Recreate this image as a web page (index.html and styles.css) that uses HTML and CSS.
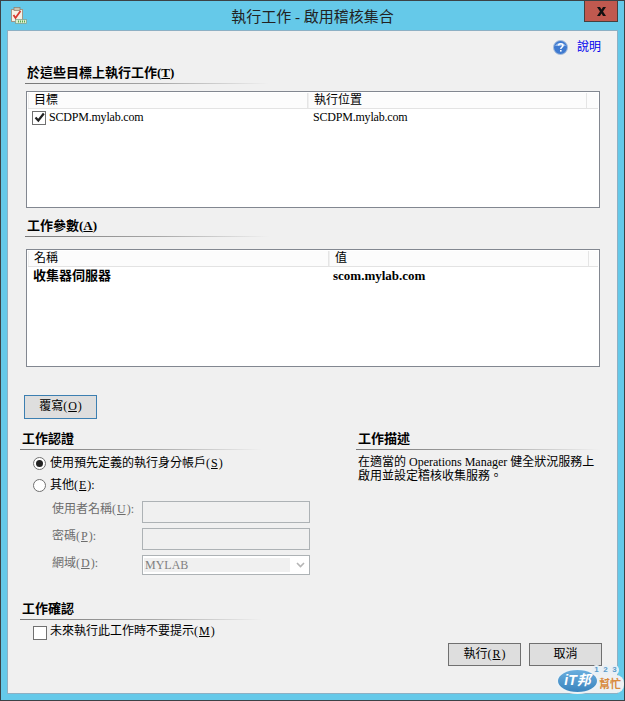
FILE: index.html
```html
<!DOCTYPE html>
<html lang="zh-Hant">
<head>
<meta charset="utf-8">
<title>執行工作 - 啟用稽核集合</title>
<link rel="stylesheet" href="styles.css">
</head>
<body>
<div class="window">
  <div class="titlebar">
    <svg class="app-icon" width="17" height="17" viewBox="0 0 17 17">
      <rect x="1.500" y="2.500" width="11" height="12" fill="#f6f1e6" stroke="#a39684"/>
      <rect x="4" y="0.500" width="6" height="3" fill="#cfc2ad" stroke="#8c7c68" stroke-width="0.700"/>
      <path d="M3.500 8l2 3 5-7" fill="none" stroke="#d8392f" stroke-width="1.800"/>
      <rect x="5.500" y="12.500" width="11" height="4" fill="#dcefd0" stroke="#7d9a88" stroke-width="0.700"/>
      <path d="M8.500 13.500v2M10.500 13.500v2M12.500 13.500v2M14.500 13.500v2" stroke="#5aa653"/>
    </svg>
    <div class="title">執行工作 - 啟用稽核集合</div>
    <div class="close">
      <svg width="11" height="9" viewBox="0 0 11 9"><path d="M1 0h3l1.500 2.500L7 0h3L7 4.500 10 9H7L5.500 6.500 4 9H1l3-4.500z" fill="#111"/></svg>
    </div>
  </div>
  <div class="client">
    <div class="help-row">
      <svg class="help-icon" width="15" height="15" viewBox="0 0 15 15">
        <circle cx="7.500" cy="7.500" r="7" fill="#3f7ad0" stroke="#a9bfdc"/>
        <path d="M2 6a6 5 0 0 1 11 0z" fill="#8fb6ea"/>
        <path d="M5.500 5.500c0-2.500 4.500-2.500 4.500 0 0 1.800-2.200 1.600-2.200 3.500" fill="none" stroke="#fff" stroke-width="1.500"/>
        <rect x="7" y="10" width="1.600" height="1.600" fill="#fff"/>
      </svg>
      <span class="help-link">說明</span>
    </div>

    <h2 class="heading heading-list">於這些目標上執行工作(<u>T</u>)</h2>
    <div class="list list-a">
      <div class="list-head cols-a">
        <div class="col-name">目標</div>
        <div class="col-name">執行位置</div>
        <div></div>
      </div>
      <div class="list-row cols-a">
        <div class="cell-check">
          <span class="check">
            <svg width="11" height="11" viewBox="0 0 11 11"><path d="M1.500 5.500l2.800 3L9.800 1.500" fill="none" stroke="#222" stroke-width="2.200"/></svg>
          </span>
          <span class="host">SCDPM.mylab.com</span>
        </div>
        <div class="cell-loc host">SCDPM.mylab.com</div>
      </div>
    </div>

    <h2 class="heading heading-list">工作參數(<u>A</u>)</h2>
    <div class="list list-b">
      <div class="list-head cols-b">
        <div class="col-name">名稱</div>
        <div class="col-name">值</div>
        <div></div>
      </div>
      <div class="list-row cols-b strong">
        <div class="cell-param">收集器伺服器</div>
        <div class="cell-value">scom.mylab.com</div>
      </div>
    </div>

    <button class="btn btn-override" type="button">覆寫(<u>O</u>)</button>

    <div class="lower">
      <div class="left-col">
        <h2 class="heading">工作認證</h2>
        <div class="radios">
          <div class="option"><span class="radio on"></span>使用預先定義的執行身分帳戶(<u>S</u>)</div>
          <div class="option"><span class="radio"></span>其他(<u>E</u>):</div>
        </div>
        <div class="creds">
          <label class="cred-label">使用者名稱(<u>U</u>):</label><div class="field"></div>
          <label class="cred-label">密碼(<u>P</u>):</label><div class="field"></div>
          <label class="cred-label">網域(<u>D</u>):</label>
          <div class="field select">
            <span class="select-value">MYLAB</span>
            <svg class="chevron" width="9" height="6" viewBox="0 0 9 6"><path d="M1 1l3.500 3.500L8 1" fill="none" stroke="#b5b5b5" stroke-width="1.600"/></svg>
          </div>
        </div>
        <h2 class="heading heading-confirm">工作確認</h2>
        <div class="option option-confirm"><span class="box"></span>未來執行此工作時不要提示(<u>M</u>)</div>
      </div>
      <div class="right-col">
        <h2 class="heading">工作描述</h2>
        <p class="description">在適當的 Operations Manager 健全狀況服務上<br>啟用並設定稽核收集服務。</p>
      </div>
    </div>

    <div class="footer">
      <button class="btn" type="button">執行(<u>R</u>)</button>
      <button class="btn" type="button">取消</button>
    </div>
  </div>

  <div class="watermark">
    <div class="help-word">幫忙</div>
    <div class="bubbles"><span>1</span><span>2</span><span>3</span></div>
    <div class="oval">iT邦</div>
  </div>
</div>
</body>
</html>
```
FILE: styles.css
```css
* { box-sizing: border-box; }
html, body { margin: 0; padding: 0; }
body {
  width: 625px;
  height: 701px;
  overflow: hidden;
  font-family: "Liberation Serif", "Noto Sans CJK TC", serif;
  font-size: 12px;
  line-height: 16px;
  color: #000;
}
u { margin: 0 1px; }
.heading u { margin: 0; }
.window {
  position: relative;
  width: 625px;
  height: 701px;
  background: #65c9e9;
  border: 1px solid #3c4246;
  overflow: hidden;
  padding: 0 7px;
}
.titlebar {
  height: 30px;
  margin: 0 -7px;
  padding-left: 9px;
  display: flex;
  align-items: center;
  position: relative;
}
.app-icon { flex: none; margin-top: -1px; }
.title {
  flex: 1;
  text-align: center;
  font-size: 15px;
  color: #222;
  padding-right: 26px;
  margin-top: 1px;
}
.close {
  position: absolute;
  top: -1px;
  right: 6px;
  width: 34px;
  height: 22px;
  background: #c0594f;
  border: 1px solid #45403f;
  display: flex;
  align-items: center;
  justify-content: center;
}
.client {
  width: 609px;
  height: 662px;
  background: #f0f0f0;
  box-shadow: 0 0 0 1px #8db0c4;
  padding-top: 8px;
}
.help-row {
  height: 16px;
  display: flex;
  align-items: center;
  padding-left: 545px;
}
.help-icon { flex: none; }
.help-link { margin-left: 9px; color: #0000ee; }
.heading {
  margin: 0;
  padding: 0 0 2px 2px;
  font-size: 13px;
  line-height: 16px;
  font-weight: 700;
  height: 19px;
  white-space: nowrap;
  background: linear-gradient(to right, #777 0%, #a8a8a8 55%, #f0f0f0 100%) left bottom / 100% 1px no-repeat;
}
.heading-list { margin: 10px 0 0 17px; width: 244px; }
.list {
  margin: 7px 0 0 18px;
  width: 574px;
  height: 117px;
  background: #fff;
  border: 1px solid #828790;
  padding: 1px 1px 0;
}
.list-b { margin-top: 12px; height: 118px; }
.list-head {
  height: 16px;
  background: #fcfcfc;
  border-bottom: 1px solid #e3e3e3;
  line-height: 15px;
}
.col-name {
  border-right: 1px solid #e5e5e5;
  padding-left: 5px;
  height: 15px;
  border-left: 1px solid #f0f0f0;
}
.cols-a { display: grid; grid-template-columns: 280px 279px 1fr; }
.cols-b { display: grid; grid-template-columns: 301px 260px 1fr; }
.list-row { height: 17px; line-height: 17px; }
.host { letter-spacing: -0.2px; }
.cell-check { display: flex; align-items: center; padding-left: 4px; }
.check {
  width: 14px;
  height: 14px;
  margin-right: 3px;
  background: #fff;
  border: 1px solid #707070;
  display: flex;
  align-items: center;
  justify-content: center;
}
.cell-loc { padding-left: 5px; }
.strong { font-weight: 700; font-size: 13px; }
.cell-param { padding-left: 5px; }
.cell-value { padding-left: 4px; }
.btn {
  font: inherit;
  color: #000;
  width: 73px;
  height: 23px;
  padding: 0 0 2px;
  background: #dedede;
  border: 1px solid #707070;
  line-height: 16px;
}
.btn-override {
  display: block;
  margin: 28px 0 0 16px;
  height: 24px;
  border-color: #3c7fb1;
}
.lower {
  margin: 12px 0 0 12px;
  display: grid;
  grid-template-columns: 336px 244px;
}
.left-col { width: 242px; }
.radios { margin-top: 2px; }
.option {
  height: 22px;
  display: flex;
  align-items: center;
  padding-left: 13px;
  white-space: nowrap;
}
.radio {
  width: 13px;
  height: 13px;
  flex: none;
  margin-right: 4px;
  border: 1px solid #707070;
  border-radius: 50%;
  background: #fff;
  position: relative;
}
.radio.on::after {
  content: "";
  position: absolute;
  left: 2px;
  top: 2px;
  width: 7px;
  height: 7px;
  border-radius: 50%;
  background: #222;
}
.creds {
  margin-top: 5px;
  display: grid;
  grid-template-columns: 122px 168px;
  row-gap: 5px;
  white-space: nowrap;
}
.cred-label {
  padding: 0 0 6px 32px;
  line-height: 16px;
  color: #6d6d6d;
}
.field {
  height: 22px;
  background: #f0f0f0;
  border: 1px solid #adb2b5;
}
.select {
  height: 20px;
  padding: 1px;
  display: flex;
  align-items: center;
  background: #fff;
}
.select-value {
  flex: none;
  width: 146px;
  height: 14px;
  background: #f0f0f0;
  line-height: 14px;
  padding-left: 1px;
  color: #808080;
}
.chevron { margin-left: 6px; }
.heading-confirm { margin-top: 24px; }
.option-confirm { height: 16px; margin-top: 3px; }
.box {
  width: 14px;
  height: 14px;
  flex: none;
  margin: 4px 3px 0 0;
  background: #fff;
  border: 1px solid #707070;
}
.description { margin: 5px 0 0 2px; white-space: nowrap; line-height: 14px; }
.footer {
  margin-top: 4px;
  padding-right: 15px;
  display: flex;
  justify-content: flex-end;
  gap: 8px;
}
.watermark {
  position: absolute;
  left: 555px;
  top: 664px;
  width: 69px;
  height: 31px;
}
.oval {
  position: absolute;
  left: 0;
  top: 3px;
  width: 43px;
  height: 26px;
  border-radius: 50%;
  background: linear-gradient(#6aaede, #3a84bd);
  border: 2px solid #eef3f6;
  color: #fff;
  font: italic 700 14px/21px "Liberation Sans", "Noto Sans CJK TC", sans-serif;
  text-align: center;
  white-space: nowrap;
}
.help-word {
  position: absolute;
  left: 36px;
  top: 10px;
  width: 32px;
  height: 18px;
  padding-left: 7px;
  border-radius: 8px;
  background: #eef1f3;
  font: 700 11px/17px "Noto Sans CJK TC", sans-serif;
  color: #d98a3c;
  white-space: nowrap;
}
.bubbles {
  position: absolute;
  left: 36px;
  top: 0;
  display: flex;
  gap: 0;
}
.bubbles span {
  width: 9px;
  height: 10px;
  border-radius: 50%;
  background: #e8f0f6;
  color: #5b9bc9;
  font: 700 8px/10px "Liberation Sans", sans-serif;
  text-align: center;
}
```
